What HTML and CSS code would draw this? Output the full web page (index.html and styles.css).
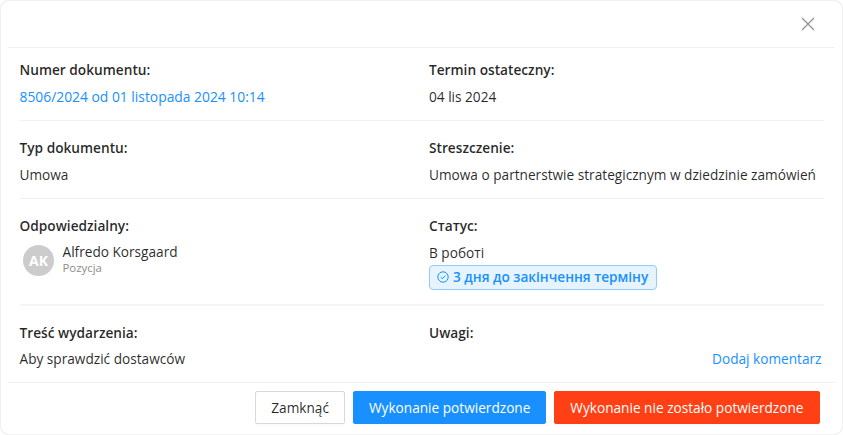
FILE: index.html
```html
<!DOCTYPE html>
<html lang="pl">
<head>
<meta charset="utf-8">
<title>Dokument</title>
<link rel="stylesheet" href="styles.css">
</head>
<body>
<div class="modal">
  <header class="head">
    <svg class="close" width="14" height="14" viewBox="0 0 14 14"><path d="M1 1l12 12M13 1L1 13" stroke="#8c8c8c" stroke-width="1.1" fill="none"/></svg>
  </header>
  <main class="body">
    <section class="row row-a">
      <div class="cell"><div class="label">Numer dokumentu:</div><div class="value link-strong">8506/2024 od 01 listopada 2024 10:14</div></div>
      <div class="cell"><div class="label">Termin ostateczny:</div><div class="value">04 lis 2024</div></div>
    </section>
    <section class="row row-b">
      <div class="cell"><div class="label">Typ dokumentu:</div><div class="value">Umowa</div></div>
      <div class="cell"><div class="label">Streszczenie:</div><div class="value nowrap">Umowa o partnerstwie strategicznym w dziedzinie zamówień</div></div>
    </section>
    <section class="row row-c">
      <div class="cell">
        <div class="label">Odpowiedzialny:</div>
        <div class="person">
          <div class="avatar">AK</div>
          <div class="who"><div class="name">Alfredo Korsgaard</div><div class="pos">Pozycja</div></div>
        </div>
      </div>
      <div class="cell">
        <div class="label">Статус:</div>
        <div class="value">В роботі</div>
        <div class="tag">
          <svg width="12" height="12" viewBox="0 0 12 12"><circle cx="6" cy="6" r="5.2" fill="none" stroke="#1890ff" stroke-width="1"/><path d="M3.7 6.1l1.7 1.6 2.9-3.1" fill="none" stroke="#1890ff" stroke-width="1"/></svg>
          <span>3 дня до закінчення терміну</span>
        </div>
      </div>
    </section>
    <section class="row row-d">
      <div class="cell"><div class="label">Treść wydarzenia:</div><div class="value">Aby sprawdzić dostawców</div></div>
      <div class="cell"><div class="label">Uwagi:</div><div class="value right"><span class="link">Dodaj komentarz</span></div></div>
    </section>
  </main>
  <footer class="foot">
    <button class="btn btn-default">Zamknąć</button>
    <button class="btn btn-primary">Wykonanie potwierdzone</button>
    <button class="btn btn-danger">Wykonanie nie zostało potwierdzone</button>
  </footer>
</div>
</body>
</html>
```

FILE: styles.css
```css
* { box-sizing: border-box; }
html, body { margin: 0; padding: 0; background: #fff; }
body { width: 843px; height: 435px; padding: 1px; font-family: "Open Sans", sans-serif; font-size: 13.65px; line-height: 22px; color: rgba(0,0,0,.85); overflow: hidden; }
.modal { width: 841px; height: 433px; border-radius: 8px; box-shadow: 0 0 2px rgba(0,0,0,.22); background: #fff; display: flex; flex-direction: column; }
.head { height: 47px; margin: 0 7px; border-bottom: 1px solid #f0f0f0; display: flex; justify-content: flex-end; align-items: center; padding-right: 20px; flex: none; }
.close { display: block; }
.body { flex: none; height: 334px; padding: 0 18.5px; }
.row { display: grid; grid-template-columns: 409.5px 1fr; border-bottom: 1px solid #f0f0f0; padding-top: 16px; }
.row-a { height: 73px; padding-top: 11px; }
.row-b { height: 78px; }
.row-c { height: 107px; border-bottom-width: 2px; border-bottom-color: #f5f5f5; }
.row-d { height: 76px; border-bottom: 0; }
.row-d .value { margin-top: 4px; }
.label { font-weight: 550; font-size: 13.7px; height: 22px; }
.value { margin-top: 4.5px; }
.row-a .value { margin-top: 5px; }
.nowrap { white-space: nowrap; }
.link-strong { color: #1890ff; font-weight: 500; font-size: 13.85px; }
.right { text-align: right; padding-right: 2px; }
.link { color: #1890ff; }
.person { display: flex; align-items: flex-start; margin-top: 5px; padding-left: 3.5px; gap: 8.5px; }
.avatar { width: 31px; height: 31px; margin-top: 3px; border-radius: 50%; background: #ccc; color: #fff; font-weight: 700; font-size: 14px; display: flex; align-items: center; justify-content: center; }
.name { line-height: 19px; }
.pos { font-size: 11.4px; line-height: 14px; color: #8c8c8c; }
.tag { display: inline-flex; align-items: center; gap: 4px; height: 25px; margin-top: 1px; padding: 0 7.5px 0 7px; background: #e6f4ff; border: 1px solid #91caff; border-radius: 4px; color: #1890ff; font-weight: 600; }
.tag svg { display: block; }
.foot { height: 52px; margin: 0 7px; border-top: 1px solid #f0f0f0; display: flex; justify-content: flex-end; align-items: flex-start; gap: 8px; padding: 8px 15.5px 0 0; flex: none; }
.btn { height: 33px; padding: 0 15px; font: 13.65px/22px "Open Sans", sans-serif; border-radius: 2px; border: 1px solid #d9d9d9; box-shadow: 0 2px 0 rgba(0,0,0,.015); background: #fff; color: rgba(0,0,0,.85); }
.btn-primary { background: #1890ff; border-color: #1890ff; color: #fff; }
.btn-danger { background: #ff4015; border-color: #ff4015; color: #fff; }
```
